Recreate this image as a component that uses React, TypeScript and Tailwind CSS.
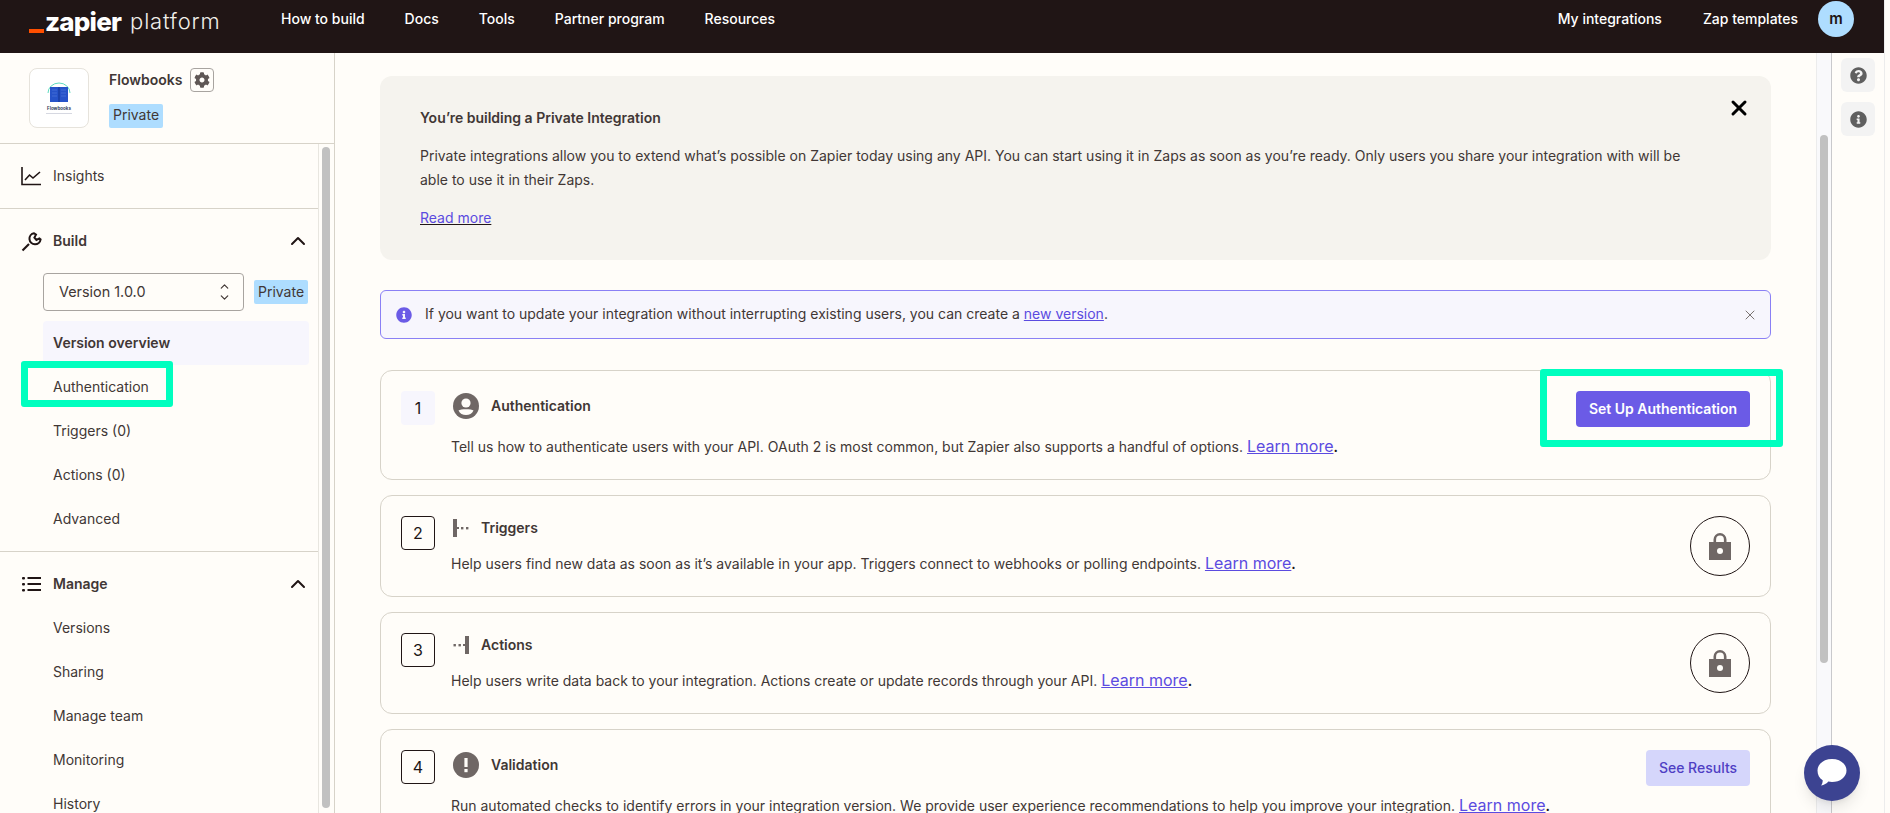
import { ChevronUp, ChevronDown, X } from "lucide-react";
import { FaCog, FaQuestionCircle, FaInfoCircle } from "react-icons/fa";

const navLeft = ["How to build", "Docs", "Tools", "Partner program", "Resources"];
const buildItems = ["Authentication", "Triggers (0)", "Actions (0)", "Advanced"];
const manageItems = ["Versions", "Sharing", "Manage team", "Monitoring", "History"];

function InsightsIcon() {
  return (
    <svg width="20" height="20" viewBox="0 0 20 20" fill="none" stroke="#201515" strokeWidth="1.6">
      <path d="M1 1v17.5h19" />
      <path d="M4 14l4.5-5 3.5 3 7-6" />
    </svg>
  );
}

function WrenchIcon() {
  return (
    <svg width="21" height="21" viewBox="0 0 21 21" fill="none" stroke="#201515" strokeWidth="2">
      <path d="M1.5 19.5l6.5-6.500" strokeWidth="2.200" />
      <path d="M13 2.200a5.600 5.600 0 1 0 6.600 6.200l-1.200-1-3 1.600-2-2.400 1.600-3z" />
    </svg>
  );
}

function ListIcon() {
  return (
    <svg width="20" height="16" viewBox="0 0 20 16" fill="#201515">
      <rect x="0" y="1" width="3" height="2.400" rx="1" />
      <rect x="0" y="7" width="3" height="2.400" rx="1" />
      <rect x="0" y="13" width="3" height="2.400" rx="1" />
      <rect x="5.500" y="1" width="13.500" height="2" />
      <rect x="5.500" y="7" width="13.500" height="2" />
      <rect x="5.500" y="13" width="13.500" height="2" />
    </svg>
  );
}

function PersonIcon() {
  return (
    <svg width="26" height="26" viewBox="0 0 26 26">
      <circle cx="13" cy="13" r="13" fill="#6f6765" />
      <circle cx="13" cy="10" r="4.600" fill="#fffdf9" />
      <path d="M5.500 17.500c2-1.600 13-1.600 15 0-1.400 3-4 4.500-7.500 4.500s-6.100-1.500-7.500-4.500z" fill="#fffdf9" />
    </svg>
  );
}

function TriggerIcon() {
  return (
    <svg width="16" height="18" viewBox="0 0 16 18" fill="#6f6765">
      <rect x="0" y="0" width="4" height="18" />
      <rect x="4" y="8" width="2" height="2" />
      <rect x="8" y="8" width="2.400" height="2.400" />
      <rect x="13" y="8" width="2.400" height="2.400" />
    </svg>
  );
}

function ActionIcon() {
  return (
    <svg width="16" height="18" viewBox="0 0 16 18" fill="#6f6765">
      <rect x="12" y="0" width="4" height="18" />
      <rect x="10" y="8" width="2" height="2" />
      <rect x="5.500" y="8" width="2.400" height="2.400" />
      <rect x="0.500" y="8" width="2.400" height="2.400" />
    </svg>
  );
}

function AlertIcon() {
  return (
    <svg width="26" height="26" viewBox="0 0 26 26">
      <circle cx="13" cy="13" r="13" fill="#6f6765" />
      <rect x="11.400" y="6" width="3.200" height="9" fill="#fffdf9" />
      <rect x="11.400" y="17" width="3.200" height="3.200" fill="#fffdf9" />
    </svg>
  );
}

function LockBadge() {
  return (
    <div className="w-[60px] h-[60px] rounded-full border border-[#201515] flex items-center justify-center shrink-0">
      <svg width="22" height="28" viewBox="0 0 22 28">
        <path d="M4.500 10V7.500a6.500 6.500 0 0 1 13 0V10h-2.600V7.500a3.900 3.900 0 0 0-7.800 0V10z" fill="#6f6765" />
        <rect x="0" y="10" width="22" height="18" fill="#6f6765" />
        <circle cx="11" cy="19" r="3" fill="#fffdf9" />
      </svg>
    </div>
  );
}

function BookLogo() {
  return (
    <div className="w-[60px] h-[60px] rounded-lg border border-[#e6e3dc] bg-white flex items-center justify-center shrink-0">
      <svg width="42" height="38" viewBox="0 0 42 38">
        <path d="M10 14a11 10 0 0 1 22 0" fill="none" stroke="#5fdcc0" strokeWidth="1" />
        <rect x="12" y="8" width="18" height="15" fill="#2653c9" />
        <rect x="20.600" y="8" width="0.800" height="15" fill="#0f2f85" />
        <path d="M14 11h5M14 14h5M14 17h5M23 11h5M23 14h5M23 17h5" stroke="#5f86e0" strokeWidth="0.500" />
        <text x="21" y="31" textAnchor="middle" fontSize="4.500" fontWeight="700" fill="#33415c" fontFamily="Inter, sans-serif">Flowbooks</text>
        <rect x="8" y="34" width="26" height="0.700" fill="#c4c8d4" />
      </svg>
    </div>
  );
}

function PrivateBadge() {
  return (
    <span className="inline-flex items-center h-6 px-1 pb-0.5 rounded-[2px] bg-[#aeddff] text-[14px] text-[#413735] shrink-0">Private</span>
  );
}

function LearnMore() {
  return (
    <>
      <a className="text-[16px] text-[#5b4be0] underline ml-1">Learn more</a>
      <span className="font-semibold text-[#201515]">.</span>
    </>
  );
}

function StepCard({
  n,
  icon,
  title,
  desc,
  action,
  done,
  tall,
  gap,
}: {
  n: number;
  icon: React.ReactNode;
  title: string;
  desc: string;
  action?: React.ReactNode;
  done?: boolean;
  tall?: boolean;
  gap: string;
}) {
  return (
    <div className="border border-[#d7d3c9] rounded-xl p-5 flex">
      <div
        className={
          done
            ? "w-[34px] h-[34px] rounded bg-[#f7f6fd] flex items-center justify-center text-[16px] text-[#201515] shrink-0"
            : "w-[34px] h-[34px] rounded border border-[#201515] flex items-center justify-center text-[16px] text-[#201515] shrink-0"
        }
      >
        {n}
      </div>
      <div className="ml-4 flex-1 min-w-0">
        <div className={tall ? "flex items-center h-[28px] mt-px mb-[14px]" : "flex items-center h-6 mb-[11px]"}>
          <span className={"flex items-center shrink-0 ml-0.5 " + gap}>{icon}</span>
          <span className="text-[14px] font-semibold text-[#413735] pb-0.5">{title}</span>
        </div>
        <p className="text-[14px] leading-6 text-[#413735] whitespace-nowrap">
          {desc}
          <LearnMore />
        </p>
      </div>
      {action}
    </div>
  );
}

export default function App() {
  return (
    <div className="relative flex w-[1890px] h-[813px] overflow-hidden bg-[#fffdf9] font-['Inter',sans-serif]">
      <div className="flex flex-col w-[1884px] h-full">
        {/* Top bar */}
        <header className="h-[53px] shrink-0 bg-[#201515] flex items-start">
          <div className="flex items-center h-[37px] w-full text-white text-[14px] font-medium">
            <div className="flex items-end ml-[29px] w-[252px] h-[28px] shrink-0">
              <span className="w-[15px] h-1 bg-[#ff4f00]" />
              <span className="text-[26px] font-extrabold leading-[33px] h-[28px] tracking-[-0.8px] ml-px">zapier</span>
              <span className="text-[22px] font-light leading-[33px] h-[28px] tracking-[0.8px] ml-[9px] text-[#f1efea]">platform</span>
            </div>
            <nav className="flex gap-10">
              {navLeft.map((item) => (
                <span key={item}>{item}</span>
              ))}
            </nav>
            <div className="ml-auto flex items-center">
              <span>My integrations</span>
              <span className="ml-[41px]">Zap templates</span>
              <span className="ml-5 mr-[30px] w-9 h-9 mt-px rounded-full bg-[#aeddff] text-[#201515] flex items-center justify-center text-[15px] font-semibold">m</span>
            </div>
          </div>
        </header>

        <div className="flex flex-1 min-h-0">
          {/* Sidebar */}
          <aside className="w-[335px] shrink-0 border-r border-[#d7d3c9] flex flex-col">
            <div className="h-[91px] shrink-0 border-b border-[#d7d3c9] pl-[29px] pt-[15px] flex">
              <BookLogo />
              <div className="ml-5">
                <div className="flex items-center h-6 gap-2">
                  <span className="text-[14px] font-semibold text-[#413735] pb-0.5">Flowbooks</span>
                  <span className="w-6 h-6 rounded border border-[#a8a4a0] flex items-center justify-center text-[#5f5755]">
                    <FaCog size={16} />
                  </span>
                </div>
                <div className="mt-[10px]">
                  <PrivateBadge />
                </div>
              </div>
            </div>
            <div className="flex flex-1 min-h-0">
              <div className="w-[319px] shrink-0 border-r border-[#e8e6e0] text-[14px] text-[#413735]">
                <div className="h-[65px] border-b border-[#d7d3c9] flex items-center pl-[21px]">
                  <InsightsIcon />
                  <span className="ml-3 pb-0.5">Insights</span>
                </div>
                <div className="border-b border-[#d7d3c9] pb-[10px] pt-3">
                  <div className="h-10 flex items-center pl-[21px] pr-2">
                    <WrenchIcon />
                    <span className="ml-[11px] font-semibold pb-0.5">Build</span>
                    <ChevronUp size={24} className="ml-auto text-[#201515]" />
                  </div>
                  <div className="flex items-center pl-[43px] mb-[10px] mt-3 gap-[10px]">
                    <div className="w-[201px] h-[38px] rounded border border-[#a8a4a0] flex items-center pl-[15px] pr-3">
                      <span className="text-[14.4px]">Version 1.0.0</span>
                      <span className="ml-auto flex flex-col text-[#413735]">
                        <ChevronUp size={13} strokeWidth={2.200} className="-mb-px" />
                        <ChevronDown size={13} strokeWidth={2.200} className="-mt-px" />
                      </span>
                    </div>
                    <PrivateBadge />
                  </div>
                  <div className="ml-[43px] w-[266px] h-11 pb-0.5 rounded bg-[#f7f6fd] flex items-center pl-[10px] font-semibold">Version overview</div>
                  {buildItems.map((item) => (
                    <div key={item} className="h-11 pb-0.5 flex items-center pl-[53px]">{item}</div>
                  ))}
                </div>
                <div className="pt-3">
                  <div className="h-10 flex items-center pl-[22px] pr-2">
                    <ListIcon />
                    <span className="ml-[11px] font-semibold pb-0.5">Manage</span>
                    <ChevronUp size={24} className="ml-auto text-[#201515]" />
                  </div>
                  <div className="pt-[2px]">
                    {manageItems.map((item) => (
                      <div key={item} className="h-11 pb-0.5 flex items-center pl-[53px]">{item}</div>
                    ))}
                  </div>
                </div>
              </div>
              <div className="flex-1 pl-[3px] pt-[3px]">
                <div className="w-2 h-[661px] rounded-full bg-[#c1c1c1]" />
              </div>
            </div>
          </aside>

          {/* Main */}
          <main className="flex-1 min-w-0 px-[45px] pt-[23px] overflow-hidden">
            <div className="h-[184px] rounded-xl bg-[#f5f3ee] pl-10 pr-5 py-[25px] flex">
              <div className="flex-1 pt-[5px] text-[14px] leading-6 text-[#413735]">
                <p className="font-semibold">You’re building a Private Integration</p>
                <p className="mt-[14px] max-w-[1265px]">
                  Private integrations allow you to extend what’s possible on Zapier today using any API. You can start using it in Zaps as soon as you’re ready. Only users you share your integration with will be able to use it in their Zaps.
                </p>
                <a className="mt-[14px] block text-[#5b4be0] underline decoration-[#201515]">Read more</a>
              </div>
              <X size={24} strokeWidth={3} className="text-black mt-[-5px] shrink-0" />
            </div>

            <div className="mt-[30px] h-[49px] rounded-md border border-[#8a80f5] bg-[#f7f6fd] flex items-center pl-[15px] pr-3 text-[14px] text-[#413735]">
              <FaInfoCircle size={16} className="text-[#6b5be6] shrink-0" />
              <span className="ml-[13px] pb-0.5">
                If you want to update your integration without interrupting existing users, you can create a{" "}
                <a className="text-[#5b4be0] underline">new version</a>.
              </span>
              <X size={16} strokeWidth={1.500} className="ml-auto text-[#7a7371]" />
            </div>

            <div className="mt-[31px] flex flex-col gap-[15px]">
              <StepCard
                n={1}
                done
                tall
                gap="mr-3"
                icon={<PersonIcon />}
                title="Authentication"
                desc="Tell us how to authenticate users with your API. OAuth 2 is most common, but Zapier also supports a handful of options."
                action={
                  <button className="ml-4 h-9 pb-0.5 w-[174px] rounded bg-[#6b5be6] text-white text-[14px] font-semibold shrink-0">Set Up Authentication</button>
                }
              />
              <StepCard
                n={2}
                gap="mr-3"
                icon={<TriggerIcon />}
                title="Triggers"
                desc="Help users find new data as soon as it’s available in your app. Triggers connect to webhooks or polling endpoints."
                action={<LockBadge />}
              />
              <StepCard
                n={3}
                gap="mr-3"
                icon={<ActionIcon />}
                title="Actions"
                desc="Help users write data back to your integration. Actions create or update records through your API."
                action={<LockBadge />}
              />
              <StepCard
                n={4}
                tall
                gap="mr-3"
                icon={<AlertIcon />}
                title="Validation"
                desc="Run automated checks to identify errors in your integration version. We provide user experience recommendations to help you improve your integration."
                action={
                  <button className="ml-4 h-9 pb-0.5 w-[104px] rounded bg-[#d5d6fb] text-[#4f3fc4] text-[14px] font-medium shrink-0">See Results</button>
                }
              />
            </div>
          </main>

          {/* Main scrollbar */}
          <div className="w-[15px] shrink-0 bg-[#f9f9fb] border-l border-[#ececec] pl-[3px] pt-[82px]">
            <div className="w-2 h-[528px] rounded-full bg-[#c1c1c1]" />
          </div>

          {/* Right rail */}
          <div className="w-[53px] shrink-0 border-l border-[#c9c9cc] pl-[9px] pt-[5px] flex flex-col gap-[10px]">
            <span className="w-[34px] h-[34px] rounded-md bg-[#f3f3f3] flex items-center justify-center text-[#5f5f5f]">
              <FaQuestionCircle size={17} />
            </span>
            <span className="w-[34px] h-[34px] rounded-md bg-[#f3f3f3] flex items-center justify-center text-[#5f5f5f]">
              <FaInfoCircle size={17} />
            </span>
          </div>
        </div>
      </div>
      <div className="flex-1 border-l border-[#ececec]" />

      {/* Annotation highlights */}
      <div className="absolute left-[21px] top-[361px] w-[152px] h-[46px] border-[7px] border-[#00ffbf] rounded-[3px]" />
      <div className="absolute left-[1540px] top-[369px] w-[243px] h-[78px] border-[7px] border-[#00ffbf] rounded-[3px]" />

      {/* Chat launcher */}
      <div className="absolute left-[1804px] top-[745px] w-14 h-14 rounded-full bg-[#3c4391] shadow-lg flex items-center justify-center">
        <svg width="30" height="28" viewBox="0 0 30 28">
          <path d="M15 0c8 0 14.500 4.800 14.500 11.500S23 23 15 23c-1.300 0-2.500-.1-3.700-.4-1.500 2-4.300 3.600-7.300 3.900 1.200-1.300 1.700-3 1.700-5.300C2.300 19.300.500 15.600.500 11.500.500 4.800 7 0 15 0z" fill="#fff" />
        </svg>
      </div>
    </div>
  );
}
